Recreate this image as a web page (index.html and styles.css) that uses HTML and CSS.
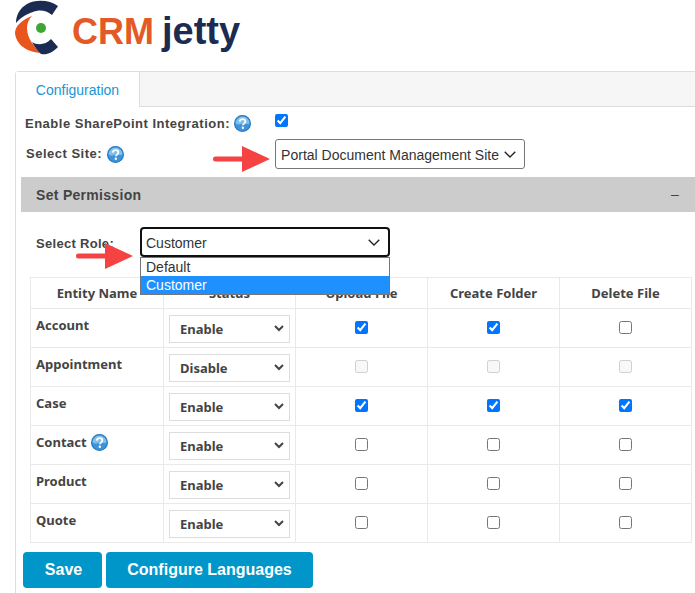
FILE: index.html
```html
<!DOCTYPE html>
<html lang="en">
<head>
<meta charset="utf-8">
<title>CRMjetty Configuration</title>
<link rel="stylesheet" href="styles.css">
</head>
<body>
<svg width="0" height="0" class="defs">
  <defs>
    <symbol id="help" viewBox="0 0 16 16">
      <circle cx="8" cy="8" r="7.500" fill="#3f93d8"/>
      <path d="M1.500 8a6.500 6.500 0 0 1 13 0c-2 1.500-4-1-6.500 0s-4.500 1.500-6.500 0z" fill="#7fc0ee"/>
      <circle cx="8" cy="8" r="7.500" fill="none" stroke="#2a78bd" stroke-width="1"/>
      <path d="M5.400 6.200c.2-1.500 1.300-2.300 2.700-2.300 1.500 0 2.600.9 2.600 2.200 0 1.100-.7 1.600-1.400 2.100-.6.400-.9.700-.9 1.400" fill="none" stroke="#fff" stroke-width="1.700"/>
      <circle cx="8.300" cy="12" r="1.100" fill="#fff"/>
    </symbol>
    <symbol id="arrow" viewBox="0 0 58 28">
      <path d="M2.500 14H30" stroke="#f54343" stroke-width="5" stroke-linecap="round" fill="none"/>
      <path d="M29 1 L57 14 L29 27z" fill="#f54343"/>
    </symbol>
  </defs>
</svg>

<header class="brand">
  <svg class="logo" viewBox="0 0 260 60" width="260" height="60" role="img" aria-label="CRMjetty">
    <path d="M58 6 C50 0 36 -1 27 4 C20 8 16 15 16 23 C21 17 27 14 33 12 C39 9.500 46 10 52 15z" fill="#1c2b52"/>
    <path d="M32 16 C22 20 15 26 15 33 C16 44 26 52 41 53 C34 47 27 38 27 28 C27 23 29 19 32 16z" fill="#e8561e"/>
    <path d="M51 39 L58 47 C52 53 47 55 41 54 C37 50 34 46 32 42 C37 45.500 46 45 51 39z" fill="#1c2b52"/>
    <circle cx="41" cy="28" r="5" fill="#3fa535"/>
    <text x="72" y="44" class="logo-crm">CRM</text>
    <text x="162" y="44" class="logo-jetty">jetty</text>
  </svg>
</header>

<main class="panel">
  <nav class="tabs"><a class="tab">Configuration</a></nav>

  <div class="config">
    <div class="config-row sharepoint">
      <span class="label sp-label">Enable SharePoint Integration:</span>
      <svg class="help"><use href="#help"/></svg>
      <input type="checkbox" class="sp-check" checked>
    </div>
    <div class="config-row site">
      <span class="label site-label">Select Site:</span>
      <svg class="help"><use href="#help"/></svg>
      <div class="site-wrap">
        <svg class="arrow arrow-site"><use href="#arrow"/></svg>
        <select class="site-select"><option>Portal Document Management Site</option></select>
      </div>
    </div>
  </div>

  <section class="perm">
    <div class="perm-bar"><span>Set Permission</span><span class="minus">–</span></div>
    <div class="role-row">
      <span class="label role-label">Select Role:</span>
      <div class="role-wrap">
        <select class="role-select"><option>Customer</option></select>
        <svg class="arrow arrow-role"><use href="#arrow"/></svg>
        <ul class="role-list">
          <li>Default</li>
          <li class="active">Customer</li>
        </ul>
      </div>
    </div>

    <table class="grid">
      <colgroup><col class="c1"><col class="c2"><col class="c3"><col class="c4"><col class="c5"></colgroup>
      <thead>
        <tr><th>Entity Name</th><th>Status</th><th>Upload File</th><th>Create Folder</th><th>Delete File</th></tr>
      </thead>
      <tbody>
        <tr><td class="name">Account</td><td><select class="status"><option>Enable</option></select></td><td><input type="checkbox" checked></td><td><input type="checkbox" checked></td><td><input type="checkbox"></td></tr>
        <tr><td class="name">Appointment</td><td><select class="status"><option>Disable</option></select></td><td><input type="checkbox" disabled></td><td><input type="checkbox" disabled></td><td><input type="checkbox" disabled></td></tr>
        <tr><td class="name">Case</td><td><select class="status"><option>Enable</option></select></td><td><input type="checkbox" checked></td><td><input type="checkbox" checked></td><td><input type="checkbox" checked></td></tr>
        <tr><td class="name">Contact <svg class="help help-inline"><use href="#help"/></svg></td><td><select class="status"><option>Enable</option></select></td><td><input type="checkbox"></td><td><input type="checkbox"></td><td><input type="checkbox"></td></tr>
        <tr><td class="name">Product</td><td><select class="status"><option>Enable</option></select></td><td><input type="checkbox"></td><td><input type="checkbox"></td><td><input type="checkbox"></td></tr>
        <tr><td class="name">Quote</td><td><select class="status"><option>Enable</option></select></td><td><input type="checkbox"></td><td><input type="checkbox"></td><td><input type="checkbox"></td></tr>
      </tbody>
    </table>

    <div class="actions">
      <button class="btn btn-save">Save</button>
      <button class="btn btn-lang">Configure Languages</button>
    </div>
  </section>
</main>
</body>
</html>
```

FILE: styles.css
```css
* { box-sizing: border-box; }
html, body { margin: 0; padding: 0; height: 593px; overflow: hidden; background: #fff; }
body { font-family: "Liberation Sans", Arial, sans-serif; color: #444; }
.defs { position: absolute; }

.brand { height: 71px; }
.logo { display: block; }
.logo-crm { font: bold 36px "Liberation Sans", sans-serif; fill: #e35a26; }
.logo-jetty { font: bold 38px "Liberation Sans", sans-serif; fill: #1c2b52; }

.panel { margin-left: 15px; width: 700px; height: 522px; border-left: 1px solid #ddd; border-top: 1px solid #ddd; border-top-left-radius: 4px; }
.tabs { height: 35px; background: #f6f6f6; border-bottom: 1px solid #ddd; display: flex; border-top-left-radius: 4px; }
.tab { width: 124px; height: 35px; background: #fff; border-right: 1px solid #ddd; color: #1b95d3; font-size: 14px; display: flex; align-items: center; justify-content: center; }

.config { height: 70px; padding-left: 9px; }
.config-row { display: flex; align-items: center; }
.label { font-weight: bold; font-size: 13px; color: #444; letter-spacing: 0.500px; white-space: nowrap; }
.help { width: 17px; height: 17px; flex: none; }
.sharepoint { height: 32px; }
.sp-label { margin-right: 4px; }
.sp-check { width: 13px; height: 13px; margin: 0 0 6px 24px; accent-color: #0075ff; }
.site { height: 30px; margin-left: 1px; }
.site-label { margin-right: 5px; margin-top: -2px; }
.site-wrap { position: relative; margin-left: 151px; }
.arrow { width: 58px; height: 28px; }
.arrow-site { position: absolute; left: -62px; top: 6px; }
.site-select, .role-select, .status { appearance: none; background-repeat: no-repeat; }
.site-select, .role-select { background-color: #fff; background-image: url("data:image/svg+xml,%3Csvg xmlns='http://www.w3.org/2000/svg' width='12' height='7'%3E%3Cpath d='M.7.7l5.300 5.300L11.300.7' fill='none' stroke='%23222' stroke-width='1.300'/%3E%3C/svg%3E"); background-position: right 8px center; }
.site-select { display: block; height: 30px; width: 250px; font: 14px "Liberation Sans", Arial, sans-serif; color: #333; border: 1px solid #767676; border-radius: 3px; padding: 2px 0 0 5px; }

.perm { margin-left: 5px; }
.perm-bar { height: 35px; background: #ccc; display: flex; justify-content: space-between; align-items: center; padding: 0 16px 0 15px; font-weight: bold; font-size: 14px; letter-spacing: 0.300px; color: #444; width: 674px; }
.minus { font-weight: normal; margin-top: -2px; }

.role-row { display: flex; align-items: flex-start; height: 65px; padding: 15px 0 0 15px; }
.role-label { width: 104px; padding-top: 9px; letter-spacing: 0.300px; }
.role-wrap { position: relative; }
.role-select { display: block; width: 250px; height: 30px; font: 14px "Liberation Sans", Arial, sans-serif; color: #333; border: 2px solid #101010; border-radius: 4px; padding: 2px 0 0 4px; }
.arrow-role { position: absolute; left: -64px; top: 15px; }
.role-list { position: absolute; z-index: 2; left: 0; top: 30px; width: 250px; margin: 0; padding: 0; list-style: none; background: #fff; border: 1px solid #767676; font-size: 14px; line-height: 18px; color: #333; }
.role-list li { padding-left: 5px; height: 18px; }
.role-list .active { background: #1e90ff; color: #fff; }

.grid { border-collapse: collapse; table-layout: fixed; width: 662px; margin-left: 9px; font-family: "Noto Sans", sans-serif; font-size: 13px; color: #444; }
.c1, .c2, .c3, .c4, .c5 { width: 132px; }
.c1 { width: 133px; }
.grid th, .grid td { border: 1px solid #e9e9e9; text-align: center; padding: 0; }
.grid th { height: 31px; font-weight: 700; }
.grid td { height: 39px; }
.grid td.name { text-align: left; font-weight: 700; padding: 0 0 6px 5px; }
.grid input { width: 13px; height: 13px; margin: 0 0 4px; vertical-align: middle; accent-color: #0075ff; }
.status { display: block; margin: 1px 0 0 5px; width: 121px; height: 28px; background-color: #fff; background-image: url("data:image/svg+xml,%3Csvg xmlns='http://www.w3.org/2000/svg' width='10' height='7'%3E%3Cpath d='M1 1l4 4 4-4' fill='none' stroke='%23444' stroke-width='2'/%3E%3C/svg%3E"); background-position: right 5px center; border: 1px solid #ddd; border-radius: 0; color: #444; font: 700 13px "Noto Sans", sans-serif; padding-left: 10px; }
.help-inline { vertical-align: middle; margin-left: 1px; }

.actions { display: flex; gap: 4px; margin: 9px 0 0 2px; }
.btn { height: 36px; border: 0; border-radius: 4px; background: #0096c9; color: #fff; font: bold 16px "Liberation Sans", Arial, sans-serif; }
.btn-save { width: 79px; padding: 1px 6px 1px 8px; }
.btn-lang { width: 207px; }
```
